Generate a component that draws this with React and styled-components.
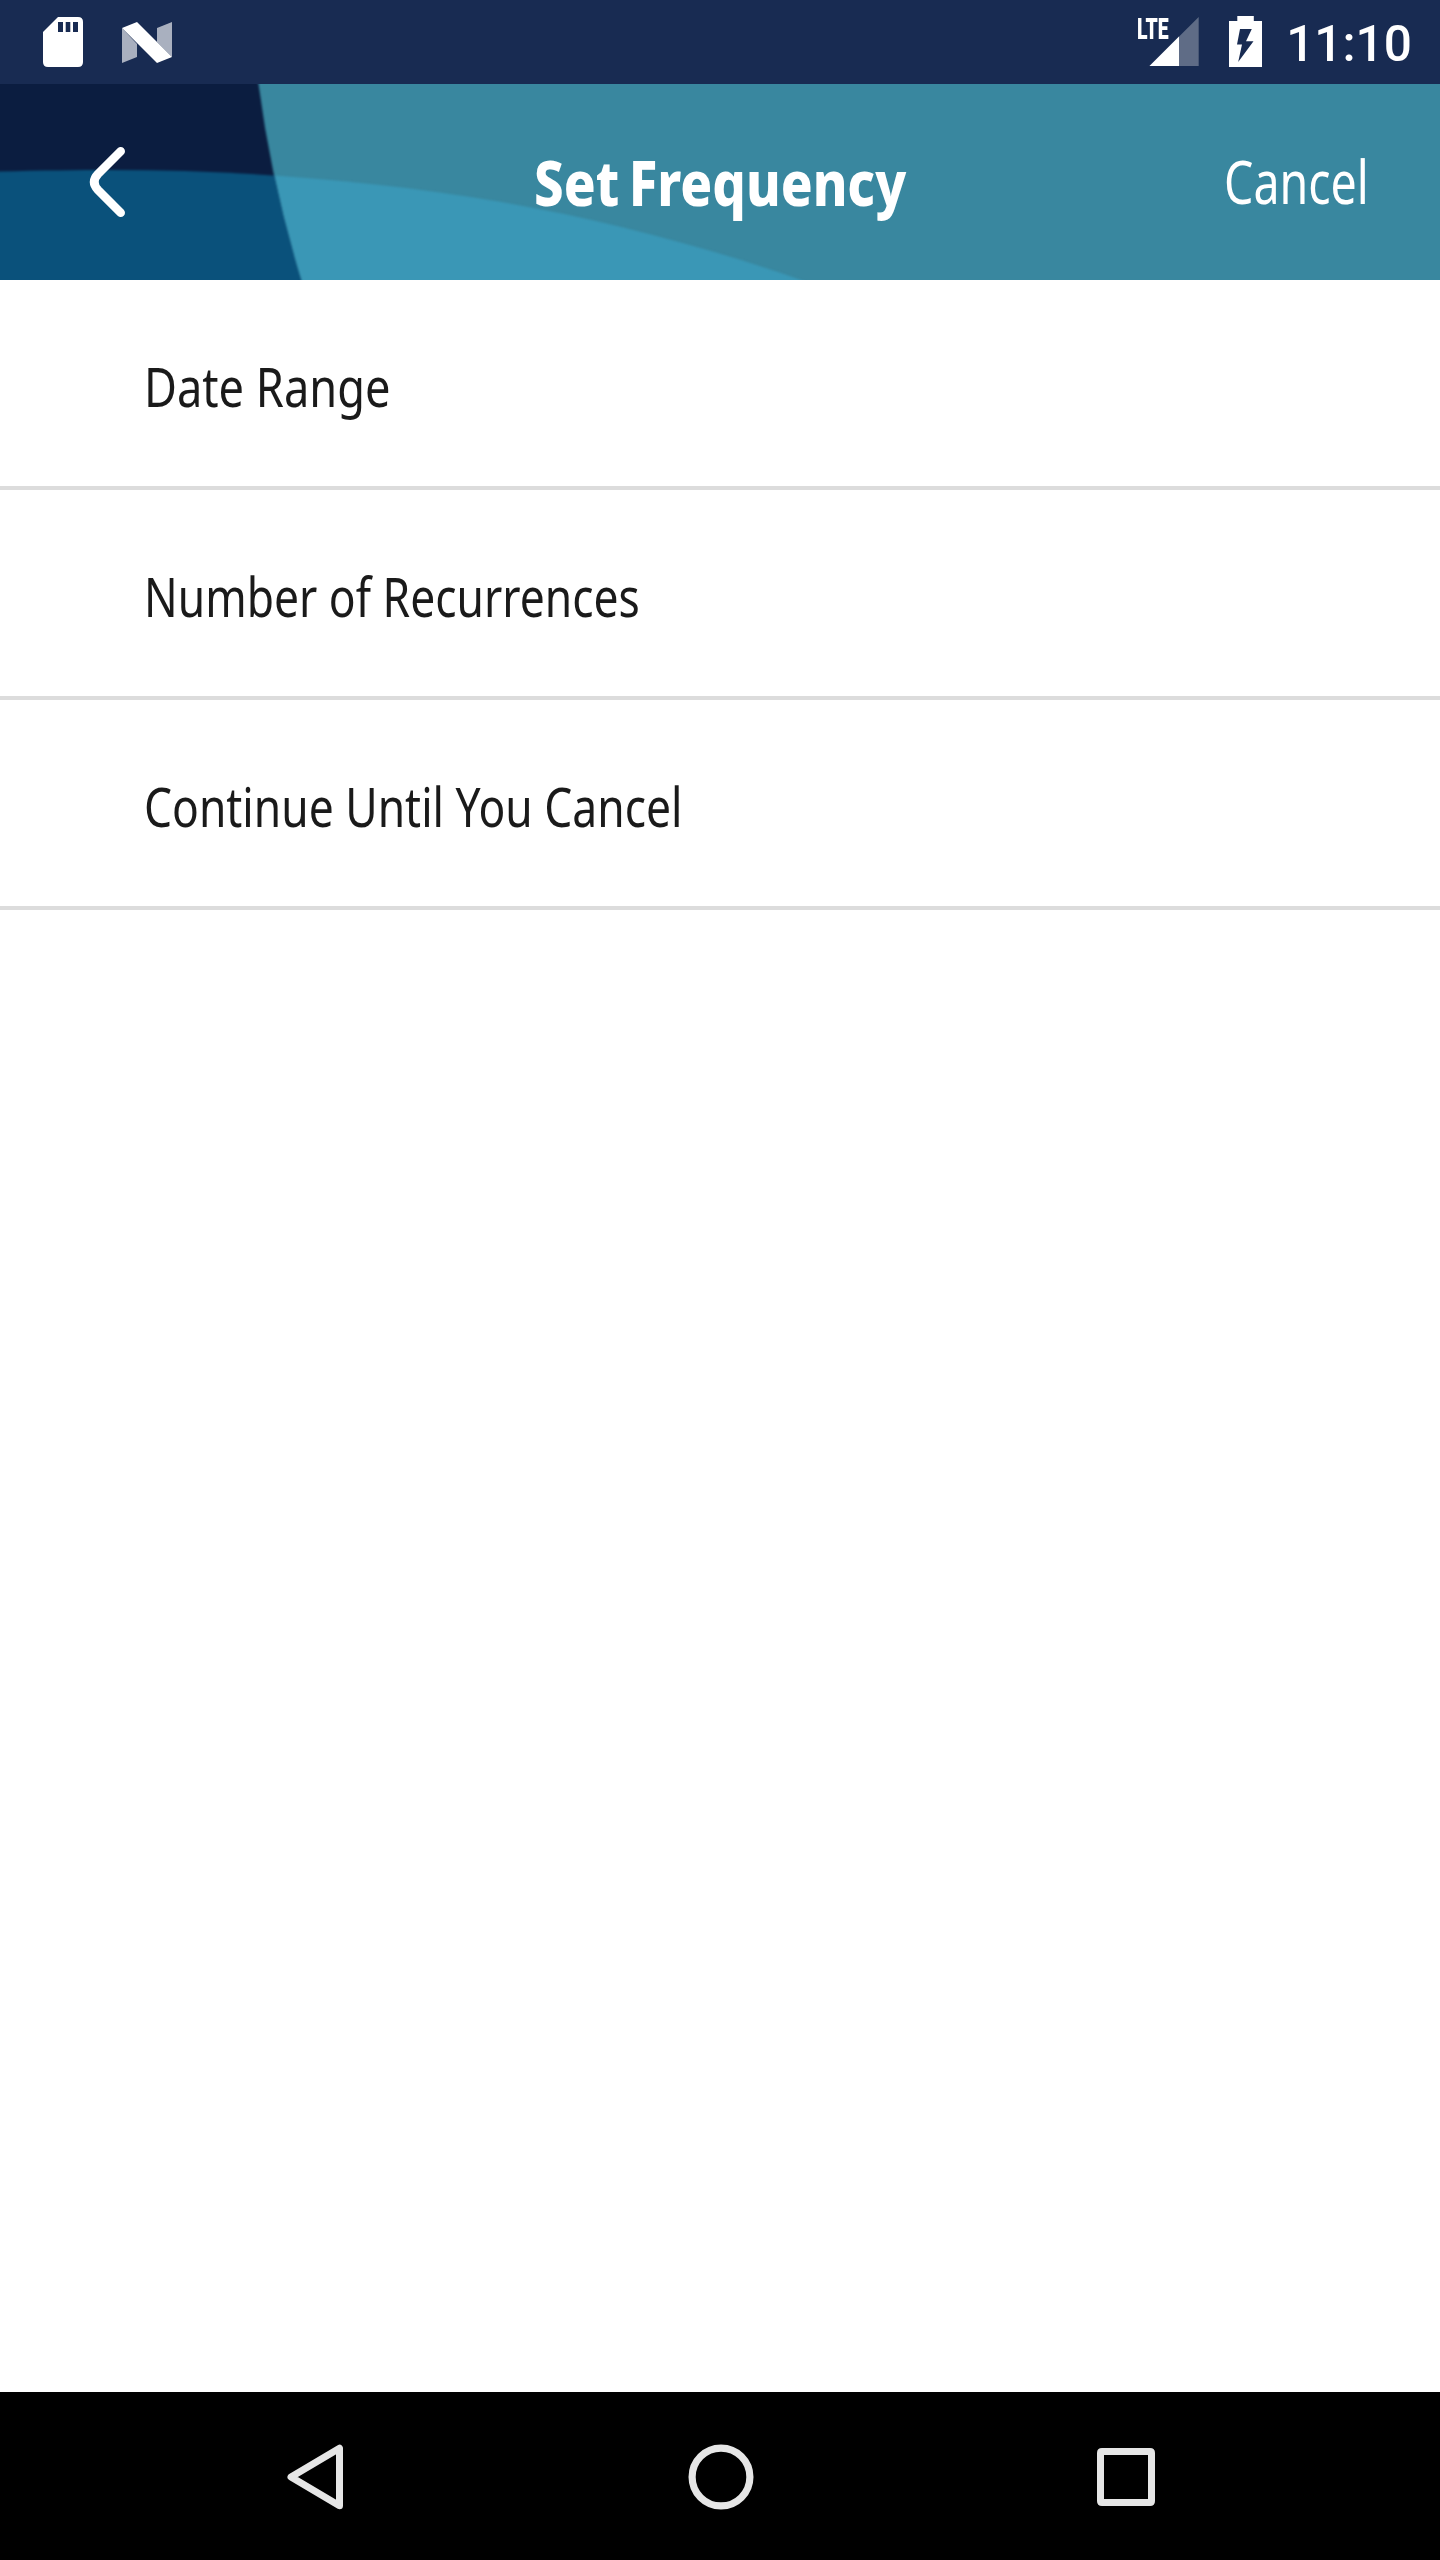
import React from "react";
import styled, { createGlobalStyle } from "styled-components";

const GlobalStyle = createGlobalStyle`
  *, *::before, *::after { box-sizing: border-box; }
  body { margin: 0; background: #fff; }
`;

const Screen = styled.div`
  display: flex;
  flex-direction: column;
  width: 1440px;
  height: 2560px;
  overflow: hidden;
  background: #ffffff;
  font-family: "Noto Sans", "Open Sans", sans-serif;
`;

const StatusBar = styled.header`
  display: flex;
  justify-content: space-between;
  height: 84px;
  flex: none;
  padding: 0 28px 0 43px;
  background: #182b52;
  color: #ffffff;
`;

const StatusGroup = styled.div`
  display: flex;
  align-items: center;
  gap: ${({ $gap }) => $gap}px;
`;

const Icon = styled.svg`
  display: block;
  flex: none;
`;

const Signal = styled.div`
  position: relative;
  width: 63px;
  height: 84px;
`;

const NetworkType = styled.span`
  position: absolute;
  top: 11px;
  left: 1.5px;
  font: 900 29px/36px Roboto, sans-serif;
  transform: scaleX(0.67);
  transform-origin: left center;
`;

const BatterySlot = styled.div`
  margin: 0 0 1px 30px;
`;

const Clock = styled.time`
  font: 500 49.6px/84px Roboto, sans-serif;
  padding-top: 3px;
  margin-left: 24.5px;
`;

const TitleBar = styled.nav`
  position: relative;
  display: grid;
  grid-template-columns: 1fr auto 1fr;
  align-items: center;
  height: 196px;
  flex: none;
  overflow: hidden;
  color: #ffffff;
`;

const Backdrop = styled.svg`
  position: absolute;
  inset: 0;
`;

const BackButton = styled.button`
  position: relative;
  justify-self: start;
  display: flex;
  padding: 0;
  margin-left: 80px;
  border: 0;
  background: none;
  color: inherit;
`;

const Title = styled.h1`
  position: relative;
  margin: 0;
  font-size: 61.5px;
  line-height: 84px;
  font-weight: 800;
  word-spacing: -5px;
  white-space: nowrap;
  transform: scaleX(0.857);
`;

const CancelButton = styled.button`
  position: relative;
  justify-self: end;
  padding: 0;
  margin: 0 71.5px 2px 0;
  border: 0;
  background: none;
  color: inherit;
  font: inherit;
  font-size: 60px;
  line-height: 82px;
  transform: scaleX(0.775);
  transform-origin: right center;
`;

const OptionList = styled.ul`
  flex: 1;
  margin: 0;
  padding: 0;
  list-style: none;
`;

const Option = styled.li`
  display: flex;
  align-items: center;
  height: 210px;
  padding: 5px 0 0 144px;
  border-bottom: 4px solid #dcdcdc;
`;

const OptionLabel = styled.span`
  color: #1a1a1a;
  font-size: 55px;
  line-height: 76px;
  white-space: nowrap;
  transform: scaleX(${({ $condense }) => $condense});
  transform-origin: left center;
`;

const SystemNav = styled.footer`
  display: flex;
  justify-content: center;
  height: 168px;
  flex: none;
  padding: 1px 0 0 1px;
  background: #000000;
`;

const NavButton = styled.button`
  display: flex;
  align-items: center;
  justify-content: center;
  width: 405px;
  padding: 0;
  border: 0;
  background: none;
  color: #e6e6e6;
`;

const SdCardIcon = () => (
  <Icon width="40" height="50" viewBox="0 0 40 50">
    <path d="M15 0H35Q40 0 40 5V45Q40 50 35 50H5Q0 50 0 45V15Z" fill="#fff" />
    <path d="M15 5h5v10h-5zM22.7 5h4.6v10h-4.6zM30 5h5v10h-5z" fill="#182b52" />
  </Icon>
);

const NougatIcon = () => (
  <Icon width="50" height="41" viewBox="0 0 50 41">
    <path d="M0 6L15 22V35L0 41ZM50 0V35L35 20V6Z" fill="#fff" opacity="0.63" />
    <path d="M0 6L15 0L50 35L35 41Z" fill="#fff" />
  </Icon>
);

const SignalIcon = () => (
  <Icon width="63" height="84" viewBox="0 0 63 84">
    <path d="M62.7 17V66H13.5Z" fill="#5f6c86" />
    <path d="M43 36.5V66H13.5Z" fill="#fff" />
  </Icon>
);

const BatteryIcon = () => (
  <Icon width="33" height="51" viewBox="0 0 33 51">
    <path d="M8.3 0H24.8V5H33V51H0V5H8.3Z" fill="#fff" />
    <path d="M11 13H22.8L17 25.3H24.5L9.2 46L13 28.6H8Z" fill="#182b52" />
  </Icon>
);

const BackArrow = () => (
  <Icon width="50" height="80" viewBox="80 142 50 80">
    <path
      d="M120.7 151.3L98 174Q90.5 182 98 190L120.7 212.7"
      fill="none"
      stroke="#fff"
      strokeWidth="8.6"
      strokeLinecap="round"
    />
  </Icon>
);

const options = [
  { label: "Date Range", condense: 0.821 },
  { label: "Number of Recurrences", condense: 0.807 },
  { label: "Continue Until You Cancel", condense: 0.807 },
];

export default function App() {
  return (
    <Screen>
      <GlobalStyle />
      <StatusBar>
        <StatusGroup $gap={39}>
          <SdCardIcon />
          <NougatIcon />
        </StatusGroup>
        <StatusGroup $gap={0}>
          <Signal>
            <SignalIcon />
            <NetworkType>LTE</NetworkType>
          </Signal>
          <BatterySlot>
            <BatteryIcon />
          </BatterySlot>
          <Clock>11:10</Clock>
        </StatusGroup>
      </StatusBar>

      <TitleBar>
        <Backdrop width="1440" height="196" viewBox="0 84 1440 196" aria-hidden="true">
          <defs>
            <filter
              id="soften"
              x="-5%"
              y="-5%"
              width="110%"
              height="110%"
              colorInterpolationFilters="sRGB"
            >
              <feGaussianBlur stdDeviation="1.1" />
            </filter>
            <clipPath id="left">
              <path d="M-40 44H252.5L258.5 84Q271.2 182 301 280L314 320H-40Z" />
            </clipPath>
          </defs>
          <rect y="84" width="1440" height="196" fill="#39879f" />
          <path
            d="M-40 174L0 171.5C40 170.5 80 170 110 170C240 170 370 180 500 201.7C600 219 701 245 801 280L904 320H-40Z"
            fill="#3a97b6"
            filter="url(#soften)"
          />
          <g filter="url(#soften)">
            <g clipPath="url(#left)">
              <rect x="-40" y="44" width="400" height="280" fill="#0b1d40" />
              <path
                d="M-40 174L0 171.5C40 170.5 80 170 110 170C240 170 370 180 500 201.7V320H-40Z"
                fill="#0a517b"
              />
            </g>
          </g>
        </Backdrop>
        <BackButton aria-label="Back">
          <BackArrow />
        </BackButton>
        <Title>Set Frequency</Title>
        <CancelButton>Cancel</CancelButton>
      </TitleBar>

      <OptionList>
        {options.map(({ label, condense }) => (
          <Option key={label}>
            <OptionLabel $condense={condense}>{label}</OptionLabel>
          </Option>
        ))}
      </OptionList>

      <SystemNav>
        <NavButton aria-label="Back">
          <Icon width="58" height="66" viewBox="0 0 58 66">
            <path
              d="M4 33L52.5 4.2V61.8Z"
              fill="none"
              stroke="currentColor"
              strokeWidth="7"
              strokeLinejoin="round"
            />
          </Icon>
        </NavButton>
        <NavButton aria-label="Home">
          <Icon width="66" height="66" viewBox="0 0 66 66">
            <circle cx="33" cy="33" r="28.9" fill="none" stroke="currentColor" strokeWidth="7.2" />
          </Icon>
        </NavButton>
        <NavButton aria-label="Recents">
          <Icon width="58" height="58" viewBox="0 0 58 58">
            <path
              fillRule="evenodd"
              d="M5 0H53Q58 0 58 5V53Q58 58 53 58H5Q0 58 0 53V5Q0 0 5 0ZM7 7V51H51V7Z"
              fill="currentColor"
            />
          </Icon>
        </NavButton>
      </SystemNav>
    </Screen>
  );
}
